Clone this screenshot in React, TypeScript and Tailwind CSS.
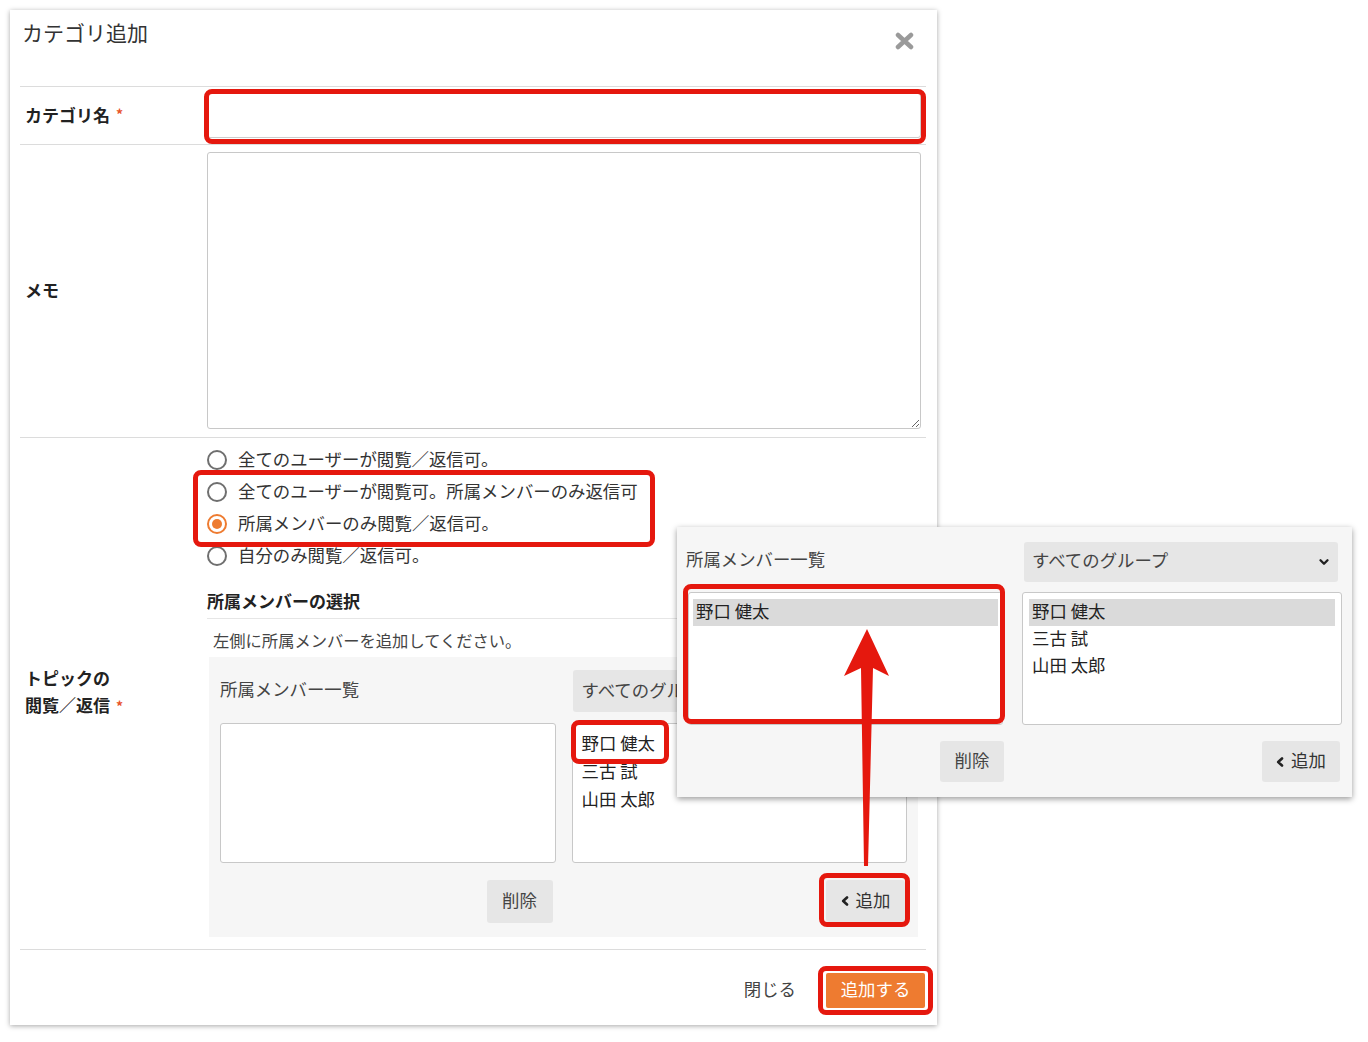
import React from 'react';
import { ChevronDown } from 'lucide-react';

const members = ['野口 健太', '三古 試', '山田 太郎'];

function Required() {
  return <span className="ml-[6px] text-[14px] font-bold text-[#e8542a]">*</span>;
}

function Radio({ checked, children }: { checked?: boolean; children: React.ReactNode }) {
  return (
    <label className="flex h-[32px] items-center gap-[11px] text-[17.4px] text-[#333]">
      <span
        className={`flex h-[20px] w-[20px] items-center justify-center rounded-full border-2 ${
          checked ? 'border-[#ee7b30]' : 'border-[#6f6f6f]'
        }`}
      >
        {checked && <span className="h-[10px] w-[10px] rounded-full bg-[#ee7b30]" />}
      </span>
      <span className="pb-[1px]">{children}</span>
    </label>
  );
}

function AddButton({ className }: { className: string }) {
  return (
    <button className={`flex items-center justify-center gap-[7px] rounded-[3px] bg-[#e6e6e6] text-[17.4px] text-[#333] ${className}`}>
      <svg width="8" height="10" viewBox="0 0 8 10">
        <path d="M6 1.5 L2.2 5 L6 8.5" fill="none" stroke="#222" strokeWidth="2.6" strokeLinecap="round" strokeLinejoin="round" />
      </svg>
      <span className="pb-[2px]">追加</span>
    </button>
  );
}

export default function App() {
  return (
    <div className="relative h-[1042px] w-[1368px] overflow-hidden bg-white font-['Noto_Sans_CJK_JP','Noto_Sans',sans-serif] text-[#333]">
      {/* modal */}
      <div className="ml-[10px] mt-[10px] flex h-[1015px] w-[927px] flex-col bg-white pl-[10px] pr-[11px] shadow-[0_1px_5px_rgba(0,0,0,0.35)]">
        <header className="flex h-[77px] items-start justify-between border-b border-[#dcdcdc] pl-[2px] pt-[7px]">
          <h1 className="text-[21px] leading-[30px] text-[#333]">カテゴリ追加</h1>
          <button className="mr-[12px] mt-[15px]">
            <svg width="19" height="18" viewBox="0 0 19 18">
              <path d="M3 3 L16 15 M16 3 L3 15" stroke="#9a9a9a" strokeWidth="4.5" strokeLinecap="round" />
            </svg>
          </button>
        </header>

        <div className="flex h-[58px] border-b border-[#dcdcdc]">
          <div className="flex w-[187px] items-center pb-[2px] pl-[5px] text-[17px] font-bold text-[#222]">
            カテゴリ名
            <Required />
          </div>
          <div className="w-[714px] pt-[6px]">
            <input className="h-[45px] w-full rounded-[3px] border border-[#ccc] bg-white" />
          </div>
        </div>

        <div className="flex h-[293px] border-b border-[#dcdcdc]">
          <div className="flex w-[187px] items-center pb-[3px] pl-[5px] text-[17px] font-bold text-[#222]">メモ</div>
          <div className="w-[714px] pt-[7px]">
            <textarea className="h-[277px] w-full rounded-[3px] border border-[#c8c8c8] bg-white" />
          </div>
        </div>

        <div className="flex h-[512px] border-b border-[#dcdcdc]">
          <div className="flex w-[187px] items-center pb-[3px] pl-[5px] text-[17px] font-bold leading-[27px] text-[#222]">
            <div>
              トピックの
              <br />
              閲覧／返信
              <Required />
            </div>
          </div>
          <div className="w-[714px] pt-[6px]">
            <Radio>全てのユーザーが閲覧／返信可。</Radio>
            <Radio>全てのユーザーが閲覧可。所属メンバーのみ返信可</Radio>
            <Radio checked>所属メンバーのみ閲覧／返信可。</Radio>
            <Radio>自分のみ閲覧／返信可。</Radio>

            <div className="mt-[14px] flex h-[33px] items-center border-b border-[#e6e6e6] pb-[3px] text-[17px] font-bold text-[#222]">
              所属メンバーの選択
            </div>
            <div className="h-[38px] pl-[6px] pt-[9px] text-[16.3px] leading-[24px] text-[#444]">
              左側に所属メンバーを追加してください。
            </div>

            <div className="ml-[2px] grid w-[709px] grid-cols-2 gap-x-[16px] bg-[#f6f6f6] px-[11px] pb-[14px] pt-[13px]">
              <div>
                <div className="flex h-[42px] items-center pb-[3px] text-[17.4px] text-[#444]">所属メンバー一覧</div>
                <div className="mt-[11px] h-[140px] rounded-[3px] border border-[#c8c8c8] bg-white" />
                <div className="mt-[17px] flex justify-end pr-[3px]">
                  <button className="h-[43px] w-[66px] rounded-[3px] bg-[#e6e6e6] pb-[2px] text-[17.4px] text-[#444]">削除</button>
                </div>
              </div>
              <div>
                <div className="ml-[1px] flex h-[42px] items-center justify-between rounded-[3px] bg-[#e6e6e6] px-[9px] pb-[1px] text-[17.4px] text-[#444]">
                  すべてのグループ
                  <ChevronDown size={14} strokeWidth={4} />
                </div>
                <div className="mt-[11px] h-[140px] rounded-[3px] border border-[#c8c8c8] bg-white p-[6px]">
                  {members.map((m) => (
                    <div key={m} className="px-[3px] pb-[3px] text-[17.4px] leading-[25px] text-[#222]">
                      {m}
                    </div>
                  ))}
                </div>
                <div className="mt-[17px] flex justify-end pr-[2px]">
                  <AddButton className="h-[42px] w-[79px]" />
                </div>
              </div>
            </div>
          </div>
        </div>

        <footer className="flex flex-1 items-center justify-end gap-[30px] pr-[1px] pt-[6px]">
          <button className="pb-[2px] text-[17.4px] text-[#444]">閉じる</button>
          <button className="h-[35px] w-[99px] rounded-[2px] bg-[#ee7b30] pb-[2px] text-[17.4px] text-white">追加する</button>
        </footer>
      </div>

      {/* highlight marks */}
      <div className="absolute left-[204px] top-[89px] h-[55px] w-[722px] rounded-[8px] border-[5px] border-[#e5180e]" />
      <div className="absolute left-[193px] top-[470px] h-[77px] w-[462px] rounded-[8px] border-[5px] border-[#e5180e]" />
      <div className="absolute left-[571px] top-[720px] h-[44px] w-[98px] rounded-[8px] border-[5px] border-[#e5180e]" />
      <div className="absolute left-[819px] top-[873px] h-[54px] w-[91px] rounded-[8px] border-[5px] border-[#e5180e]" />
      <div className="absolute left-[818px] top-[966px] h-[49px] w-[115px] rounded-[8px] border-[5px] border-[#e5180e]" />

      {/* zoomed panel */}
      <div className="absolute left-[677px] top-[527px] grid h-[270px] w-[675px] grid-cols-[319px_320px] gap-x-[17px] bg-[#f6f6f6] pl-[9px] pt-[15px] shadow-[0_2px_6px_rgba(0,0,0,0.4)]">
        <div>
          <div className="flex h-[40px] items-center pb-[5px] text-[17.4px] text-[#444]">所属メンバー一覧</div>
          <div className="mx-[2px] mt-[10px] h-[133px] rounded-[3px] border border-[#c8c8c8] bg-white px-[4px] pt-[6px]">
            <div className="bg-[#dadada] px-[3px] pb-[3px] text-[17.4px] leading-[24px] text-[#222]">野口 健太</div>
          </div>
          <div className="mt-[16px] flex justify-end pr-[1px]">
            <button className="h-[41px] w-[64px] rounded-[3px] bg-[#e6e6e6] pb-[2px] text-[17.4px] text-[#444]">削除</button>
          </div>
        </div>
        <div>
          <div className="ml-[2px] mr-[4px] flex h-[40px] items-center justify-between rounded-[3px] bg-[#e6e6e6] pl-[8px] pr-[7px] text-[17.4px] text-[#444]">
            <span className="pb-[3px]">すべてのグループ</span>
            <ChevronDown size={14} strokeWidth={4} className="text-[#222]" />
          </div>
          <div className="mt-[10px] h-[133px] rounded-[3px] border border-[#c8c8c8] bg-white p-[6px]">
            {members.map((m, i) => (
              <div key={m} className={`px-[3px] pb-[3px] text-[17.4px] leading-[24px] text-[#222] ${i === 0 ? 'bg-[#dadada]' : ''}`}>
                {m}
              </div>
            ))}
          </div>
          <div className="mt-[16px] flex justify-end pr-[2px]">
            <AddButton className="h-[41px] w-[78px]" />
          </div>
        </div>
      </div>
      <div className="absolute left-[683px] top-[584px] h-[140px] w-[322px] rounded-[8px] border-[5px] border-[#e5180e]" />

      {/* arrow */}
      <svg className="pointer-events-none absolute left-0 top-0" width="1368" height="1042">
        <polygon points="864,866 868,866 873,668 889,676 867,629 844,676 861,668" fill="#e5180e" />
      </svg>
    </div>
  );
}
